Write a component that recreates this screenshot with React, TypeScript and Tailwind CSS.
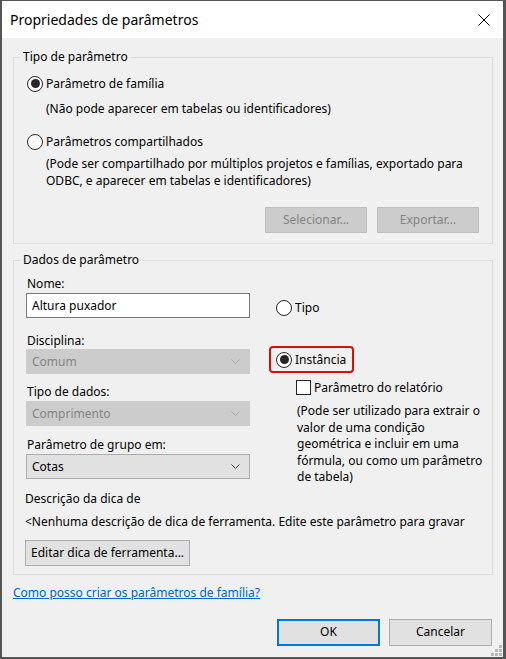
import React from "react";

type RadioProps = { checked?: boolean };

const Radio = ({ checked }: RadioProps) => (
  <span className="w-[16px] h-[16px] shrink-0 rounded-full border border-[#262626] bg-white flex items-center justify-center">
    {checked && <span className="w-[9px] h-[9px] rounded-full bg-[#262626]" />}
  </span>
);

const Chevron = ({ color }: { color: string }) => (
  <svg width="9" height="5" viewBox="0 0 9 5" className="shrink-0">
    <path d="M0.5 0.5 L4.5 4.5 L8.5 0.5" fill="none" stroke={color} strokeWidth="1" />
  </svg>
);

type SelectProps = { value: string; disabled?: boolean };

const Select = ({ value, disabled }: SelectProps) => (
  <div
    className={
      disabled
        ? "h-[25px] flex items-center justify-between pl-[5px] pr-[9px] bg-[#cccccc] border border-[#cccccc] text-[#838383]"
        : "h-[25px] flex items-center justify-between pl-[5px] pr-[9px] bg-[#e1e1e1] border border-[#adadad] text-black"
    }
  >
    <span>{value}</span>
    <Chevron color={disabled ? "#a8a8a8" : "#404040"} />
  </div>
);

export default function App() {
  return (
    <div className="w-[506px] h-[659px] flex flex-col border-t border-l-2 border-r-[3px] border-b-2 border-[#555555] font-['Segoe_UI','Noto_Sans',sans-serif] text-[12px] text-black">
      {/* Title bar */}
      <div className="h-[37px] shrink-0 bg-white flex items-center justify-between pl-[8px] pr-[13px]">
        <span className="text-[14px]">Propriedades de parâmetros</span>
        <svg width="12" height="12" viewBox="0 0 12 12">
          <path d="M0.5 0.5 L11.5 11.5 M11.5 0.5 L0.5 11.5" stroke="#000" strokeWidth="1" />
        </svg>
      </div>

      {/* Body */}
      <div className="relative flex-1 bg-[#f0f0f0] pl-[11px] pr-[10px] flex flex-col">
        <fieldset className="mt-[11px] border border-[#dcdcdc] pl-[13px] pr-[13px] pb-[10px]">
          <legend className="ml-[-7px] px-[3px] leading-[16px]">Tipo de parâmetro</legend>
          <div className="mt-[10px] h-[17px] flex items-center gap-[3px]">
            <Radio checked />
            <span className="leading-[17px]">Parâmetro de família</span>
          </div>
          <p className="mt-[8px] ml-[19px] leading-[17px]">(Não pode aparecer em tabelas ou identificadores)</p>
          <div className="mt-[16px] h-[17px] flex items-center gap-[3px]">
            <Radio />
            <span className="leading-[17px]">Parâmetros compartilhados</span>
          </div>
          <p className="mt-[5px] ml-[19px] leading-[17px] whitespace-nowrap">
            (Pode ser compartilhado por múltiplos projetos e famílias, exportado para
            <br />
            ODBC, e aparecer em tabelas e identificadores)
          </p>
          <div className="mt-[18px] flex justify-end gap-[10px]">
            <button className="w-[102px] h-[26px] bg-[#cccccc] border border-[#bfbfbf] text-[#838383]">
              Selecionar...
            </button>
            <button className="w-[102px] h-[26px] bg-[#cccccc] border border-[#bfbfbf] text-[#838383]">
              Exportar...
            </button>
          </div>
        </fieldset>

        <fieldset className="mt-[8px] border border-[#dcdcdc] pl-[11px] pr-[10px] pb-[8px]">
          <legend className="ml-[-5px] px-[3px] leading-[16px]">Dados de parâmetro</legend>
          <div className="flex items-start">
            {/* left column */}
            <div className="ml-[1px] w-[224px] flex flex-col">
              <label className="mt-[7px] pl-[1px] leading-[17px]">Nome:</label>
              <div className="mt-[1px] h-[25px] flex items-center pl-[5px] bg-white border border-[#7a7a7a]">
                Altura puxador
              </div>
              <label className="mt-[14px] pl-[1px] leading-[17px]">Disciplina:</label>
              <Select value="Comum" disabled />
              <label className="mt-[9px] pl-[1px] leading-[17px]">Tipo de dados:</label>
              <div className="mt-[1px]">
                <Select value="Comprimento" disabled />
              </div>
              <label className="mt-[10px] pl-[1px] leading-[17px]">Parâmetro de grupo em:</label>
              <div className="mt-[1px]">
                <Select value="Cotas" />
              </div>
            </div>

            {/* right column */}
            <div className="ml-[19px] flex flex-col">
              <div className="mt-[31px] ml-[7px] h-[17px] flex items-center gap-[3px]">
                <Radio />
                <span className="leading-[17px]">Tipo</span>
              </div>
              <div className="mt-[30px] w-[85px] h-[27px] flex items-center gap-[3px] pl-[5px] border-2 border-[#e00b0b] rounded-[4px]">
                <Radio checked />
                <span className="leading-[17px]">Instância</span>
              </div>
              <div className="mt-[6px] ml-[27px] h-[16px] flex items-center gap-[3px]">
                <span className="w-[15px] h-[15px] shrink-0 border border-[#262626] bg-white" />
                <span className="leading-[17px]">Parâmetro do relatório</span>
              </div>
              <p className="mt-[8px] ml-[28px] leading-[16.5px] whitespace-nowrap">
                (Pode ser utilizado para extrair o
                <br />
                valor de uma condição
                <br />
                geométrica e incluir em uma
                <br />
                fórmula, ou como um parâmetro
                <br />
                de tabela)
              </p>
            </div>
          </div>

          <p className="mt-[4px] leading-[17px]">Descrição da dica de</p>
          <p className="mt-[6px] leading-[17px] whitespace-nowrap overflow-hidden">
            &lt;Nenhuma descrição de dica de ferramenta. Edite este parâmetro para gravar
          </p>
          <button className="mt-[10px] h-[26px] px-[5px] bg-[#e1e1e1] border border-[#adadad]">
            Editar dica de ferramenta...
          </button>
        </fieldset>

        <a href="#" className="mt-[9px] self-start leading-[17px] text-[#0066cc] underline">
          Como posso criar os parâmetros de família?
        </a>

        <div className="mt-[18px] pr-[1px] flex justify-end gap-[9px]">
          <button className="w-[103px] h-[27px] bg-[#e1e1e1] border-2 border-[#0078d7]">OK</button>
          <button className="w-[103px] h-[27px] bg-[#e1e1e1] border border-[#adadad]">Cancelar</button>
        </div>

        {/* resize grip */}
        <svg width="11" height="11" viewBox="0 0 11 11" className="absolute right-[1px] bottom-[1px]">
          <rect x="8" y="0" width="3" height="3" fill="#b8b8b8" />
          <rect x="4" y="4" width="3" height="3" fill="#b8b8b8" />
          <rect x="8" y="4" width="3" height="3" fill="#b8b8b8" />
          <rect x="0" y="8" width="3" height="3" fill="#b8b8b8" />
          <rect x="4" y="8" width="3" height="3" fill="#b8b8b8" />
          <rect x="8" y="8" width="3" height="3" fill="#b8b8b8" />
        </svg>
      </div>
    </div>
  );
}
